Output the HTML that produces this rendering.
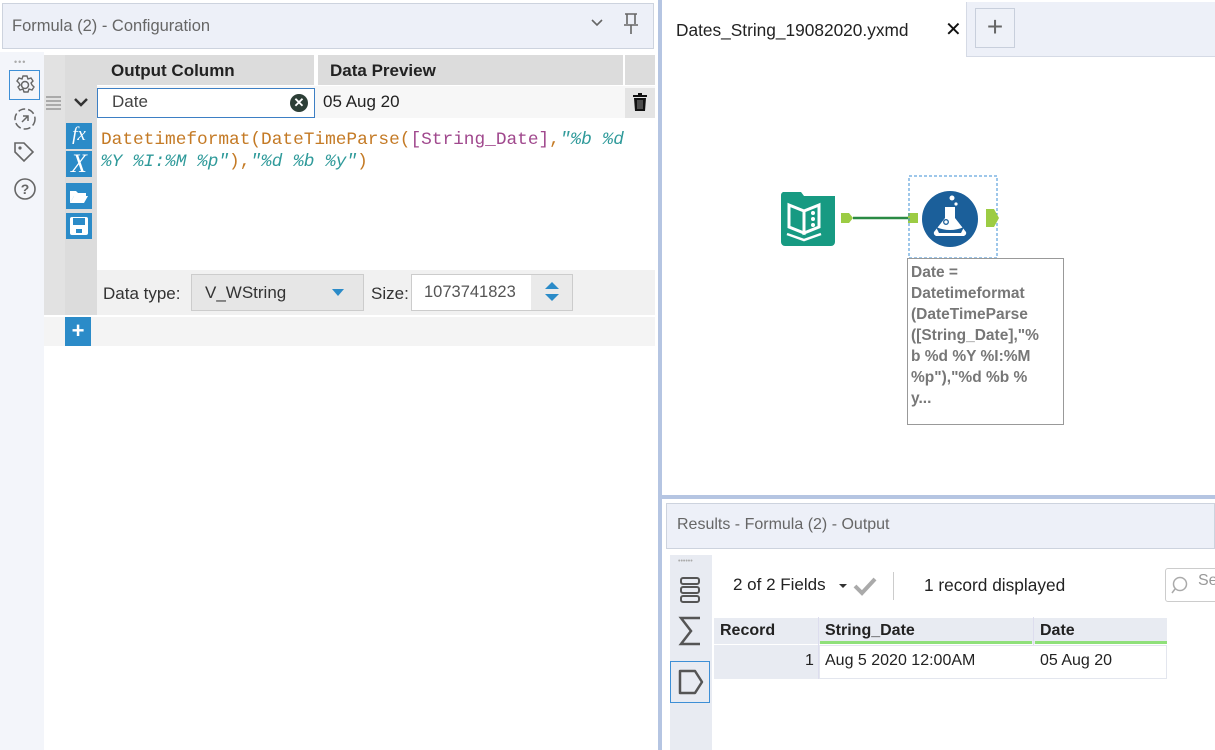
<!DOCTYPE html>
<html><head><meta charset="utf-8"><style>
*{box-sizing:border-box;margin:0;padding:0}
body{width:1215px;height:750px;overflow:hidden;background:#fff;font-family:"Liberation Sans",sans-serif;position:relative;font-size:16px;color:#222}
.a{position:absolute;white-space:nowrap}
.mono{font-family:"Liberation Mono",monospace}
</style></head><body>
<div class="a" style="left:0;top:0;width:656px;height:750px;background:#fff"></div>
<div class="a" style="left:2px;top:3px;width:652px;height:46px;background:#edf0f8;border:1px solid #cdd3de"></div>
<div class="a" style="left:12px;top:17px;font-size:16.5px;color:#666">Formula (2) - Configuration</div>
<svg class="a" style="left:590px;top:18px" width="14" height="10"><path d="M2 2l5 5 5-5" stroke="#666" stroke-width="1.6" fill="none"/></svg>
<svg class="a" style="left:622px;top:12px" width="18" height="24"><path d="M3 2h12M5 2v10M13 2v10M2 13h14M9 13v9" stroke="#666" stroke-width="1.6" fill="none"/></svg>
<div class="a" style="left:0;top:52px;width:44px;height:698px;background:#f3f5fa"></div>
<div class="a" style="left:14px;top:57px;color:#aaa;font-size:9px;letter-spacing:1px">•••</div>
<div class="a" style="left:9px;top:70px;width:31px;height:30px;border:1.5px solid #3d8fd6"></div>
<svg class="a" style="left:14px;top:74px" width="22" height="22"><circle cx="11" cy="11" r="3.5" fill="none" stroke="#666" stroke-width="1.5"/><path d="M9 2h4l1 3 3-1 2 3-2 2 1 2 2 2-2 3-3-1-1 3h-4l-1-3-3 1-2-3 2-2-1-2-2-2 2-3 3 1z" fill="none" stroke="#666" stroke-width="1.4"/></svg>
<svg class="a" style="left:13px;top:107px" width="24" height="24"><circle cx="12" cy="12" r="10" fill="none" stroke="#666" stroke-width="1.5" stroke-dasharray="7 3"/><path d="M9 15l6-6M10 9h5v5" stroke="#666" stroke-width="1.5" fill="none"/></svg>
<svg class="a" style="left:12px;top:140px" width="24" height="24"><path d="M3 3h9l9 9-9 9-9-9z" fill="none" stroke="#666" stroke-width="1.6"/><circle cx="8" cy="8" r="1.6" fill="#666"/></svg>
<svg class="a" style="left:13px;top:177px" width="24" height="24"><circle cx="12" cy="12" r="10" fill="none" stroke="#666" stroke-width="1.6"/><text x="12" y="17" font-size="14" font-weight="bold" text-anchor="middle" fill="#666" font-family="Liberation Sans">?</text></svg>
<div class="a" style="left:44px;top:55px;width:21px;height:260px;background:#e2e2e2"></div>
<div class="a" style="left:65px;top:55px;width:32px;height:260px;background:#dcdcdc"></div>
<div class="a" style="left:97px;top:55px;width:217px;height:30px;background:#dcdcdc"></div>
<div class="a" style="left:318px;top:55px;width:305px;height:30px;background:#dcdcdc"></div>
<div class="a" style="left:625px;top:55px;width:30px;height:30px;background:#dcdcdc"></div>
<div class="a" style="left:111px;top:61px;font-weight:bold;font-size:17px">Output Column</div>
<div class="a" style="left:330px;top:61px;font-weight:bold;font-size:17px">Data Preview</div>
<div class="a" style="left:97px;top:86px;width:558px;height:32px;background:#f7f7f7"></div>
<div class="a" style="left:46px;top:96px;width:15px;height:1.5px;background:#aaa;box-shadow:0 4px 0 #aaa,0 8px 0 #aaa,0 12px 0 #aaa"></div>
<svg class="a" style="left:73px;top:96px" width="16" height="12"><path d="M2 3l6 6 6-6" stroke="#333" stroke-width="2.5" fill="none"/></svg>
<div class="a" style="left:97px;top:88px;width:218px;height:30px;background:#fff;border:1.5px solid #3d7fc4"></div>
<div class="a" style="left:112px;top:92px;font-size:17px;color:#444">Date</div>
<div class="a" style="left:290px;top:94px;width:18px;height:18px;border-radius:50%;background:#2d3f37;color:#fff;font-size:13px;font-weight:bold;text-align:center;line-height:18px">✕</div>
<div class="a" style="left:323px;top:92px;font-size:17px">05 Aug 20</div>
<div class="a" style="left:625px;top:88px;width:30px;height:30px;background:#e4e4e4"></div>
<svg class="a" style="left:631px;top:91px" width="18" height="22"><path d="M7 2h4v2h5v2H2V4h5z" fill="#111"/><path d="M3 7h12l-1 13H4z" fill="#111"/><path d="M7 9v9M9 9v9M11 9v9" stroke="#888" stroke-width="1"/></svg>
<div class="a" style="left:66px;top:123px;width:26px;height:26px;background:#2b8bc8;color:#fff;font-family:'Liberation Serif',serif;font-style:italic;font-size:19px;text-align:center;line-height:24px">fx</div>
<div class="a" style="left:66px;top:151px;width:26px;height:26px;background:#2b8bc8;color:#fff;font-family:'Liberation Serif',serif;font-style:italic;font-size:26px;text-align:center;line-height:26px">X</div>
<div class="a" style="left:66px;top:183px;width:26px;height:26px;background:#2b8bc8"></div>
<svg class="a" style="left:68px;top:187px" width="22" height="18"><path d="M2 4h6l2 2h8v3H6L2 16z" fill="#fff"/><path d="M6 9h14l-4 7H2z" fill="#fff"/></svg>
<div class="a" style="left:66px;top:213px;width:26px;height:26px;background:#2b8bc8"></div>
<svg class="a" style="left:67px;top:214px" width="24" height="24"><rect x="3" y="3" width="18" height="18" rx="2" fill="#fff"/><rect x="6" y="4" width="12" height="7" fill="#2b8bc8"/><rect x="9" y="15" width="6" height="4" fill="#2b8bc8"/></svg>
<div class="a mono" style="left:101px;top:129px;font-size:17.8px;line-height:22px;color:#c47a25;white-space:pre">Datetimeformat(DateTimeParse(<span style="color:#a0488d">[String_Date]</span>,<i style="color:#2f9a9a">"%b %d</i>
<i style="color:#2f9a9a">%Y %I:%M %p"</i>),<i style="color:#2f9a9a">"%d %b %y"</i>)</div>
<div class="a" style="left:97px;top:270px;width:558px;height:45px;background:#f1f1f1"></div>
<div class="a" style="left:103px;top:284px;font-size:17px;color:#333">Data type:</div>
<div class="a" style="left:191px;top:274px;width:173px;height:37px;background:#e6e6e6;border:1px solid #ccc"></div>
<div class="a" style="left:205px;top:283px;font-size:17px;color:#333">V_WString</div>
<svg class="a" style="left:331px;top:288px" width="14" height="9"><path d="M1 1h12L7 8z" fill="#2b8bc8"/></svg>
<div class="a" style="left:371px;top:284px;font-size:17px;color:#333">Size:</div>
<div class="a" style="left:411px;top:274px;width:162px;height:37px;background:#fff;border:1px solid #ccc"></div>
<div class="a" style="left:531px;top:275px;width:41px;height:35px;background:#eaeaea"></div>
<div class="a" style="left:424px;top:283px;font-size:16.5px;color:#555">1073741823</div>
<svg class="a" style="left:544px;top:279px" width="16" height="26"><path d="M1 10L8 3l7 7z" fill="#2b8bc8"/><path d="M1 15l7 7 7-7z" fill="#2b8bc8"/></svg>
<div class="a" style="left:44px;top:317px;width:611px;height:29px;background:#f4f4f4"></div>
<div class="a" style="left:65px;top:317px;width:26px;height:29px;background:#2b8bc8;color:#fff;font-size:22px;font-weight:bold;text-align:center;line-height:28px">+</div>
<div class="a" style="left:656px;top:0;width:4px;height:750px;background:#fff"></div>
<div class="a" style="left:658px;top:0;width:4px;height:750px;background:#b5c5e2"></div>
<div class="a" style="left:662px;top:0;width:553px;height:57px;background:#fff"></div>
<div class="a" style="left:966px;top:2px;width:249px;height:55px;background:#edf0f8;border-left:1px solid #d5dae5;border-bottom:1px solid #d5dae5"></div>
<div class="a" style="left:975px;top:8px;width:40px;height:40px;border:1px solid #c8cfdc;background:#eef1f8;color:#666;font-size:28px;text-align:center;line-height:36px">+</div>
<div class="a" style="left:676px;top:20px;font-size:17.3px;color:#222">Dates_String_19082020.yxmd</div>
<div class="a" style="left:945px;top:17px;font-size:20px;color:#111">✕</div>
<svg class="a" style="left:775px;top:175px" width="300" height="260">
<path d="M8 17h18l3 4h31v46a4 4 0 0 1-4 4H10a4 4 0 0 1-4-4V21a4 4 0 0 1 2-4z" fill="#179a82"/>
<path d="M14 30l15 6v22l-15-6zM44 30l-15 6v22l15-6z" fill="none" stroke="#fff" stroke-width="3"/>
<circle cx="38" cy="38" r="2" fill="#fff"/><circle cx="38" cy="44" r="2" fill="#fff"/><circle cx="38" cy="50" r="2" fill="#fff"/>
<path d="M12 59l17 6 17-6" fill="none" stroke="#fff" stroke-width="2.5"/>
<path d="M66 38h8l4 5-4 5h-8z" fill="#9ccc44"/>
<line x1="78" y1="43" x2="136" y2="43" stroke="#2a8a44" stroke-width="2.5"/>
<rect x="133" y="38" width="10" height="10" fill="#9ccc44"/>
<rect x="134" y="1" width="88" height="82" fill="none" stroke="#3d8fd6" stroke-dasharray="3 2"/>
<circle cx="175" cy="44" r="28" fill="#1b5f9a"/>
<path d="M168 32h14M170 32v11l-11 14a3 3 0 0 0 3 4h26a3 3 0 0 0 3-4l-11-14V32" fill="#fff"/>
<path d="M161 52q14 6 28 0l-3 6h-22z" fill="#1b5f9a"/>
<circle cx="171" cy="47" r="2.3" fill="none" stroke="#1b5f9a" stroke-width="1.3"/>
<circle cx="177" cy="23" r="2.5" fill="#fff"/><circle cx="181" cy="29" r="1.6" fill="#fff"/>
<path d="M211 34h8l5 9-5 9h-8z" fill="#9ccc44"/>
</svg>
<div class="a" style="left:907px;top:258px;width:157px;height:167px;border:1px solid #999;background:#fff"></div>
<div class="a" style="left:911px;top:262px;font-size:15.5px;line-height:21px;color:#777;font-weight:bold">Date =<br>Datetimeformat<br>(DateTimeParse<br>([String_Date],"%<br>b %d %Y %I:%M<br>%p"),"%d %b %<br>y...</div>
<div class="a" style="left:662px;top:495px;width:553px;height:4px;background:#b5c5e2"></div>
<div class="a" style="left:666px;top:503px;width:549px;height:46px;background:#edf0f8;border:1px solid #cdd3de"></div>
<div class="a" style="left:677px;top:516px;font-size:16px;color:#666">Results - Formula (2) - Output</div>
<div class="a" style="left:670px;top:555px;width:42px;height:195px;background:#e8ebf2"></div>
<div class="a" style="left:678px;top:558px;color:#aaa;font-size:7px">••••••</div>
<svg class="a" style="left:679px;top:575px" width="24" height="30"><rect x="2" y="3" width="18" height="6" rx="2" fill="none" stroke="#555" stroke-width="2"/><rect x="2" y="12" width="18" height="6" rx="2" fill="none" stroke="#555" stroke-width="2"/><rect x="2" y="21" width="18" height="6" rx="2" fill="none" stroke="#555" stroke-width="2"/></svg>
<svg class="a" style="left:678px;top:615px" width="26" height="32"><path d="M22 3H3l10 13L3 29h19" fill="none" stroke="#555" stroke-width="2.5"/></svg>
<div class="a" style="left:670px;top:661px;width:40px;height:42px;border:1.5px solid #3d8fd6"></div>
<svg class="a" style="left:677px;top:667px" width="28" height="30"><path d="M3 4h15l7 11-7 11H3z" fill="none" stroke="#555" stroke-width="2.5" stroke-linejoin="round"/></svg>
<div class="a" style="left:733px;top:575px;font-size:17px">2 of 2 Fields</div>
<svg class="a" style="left:838px;top:583px" width="10" height="6"><path d="M1 1h8L5 5z" fill="#333"/></svg>
<svg class="a" style="left:853px;top:576px" width="24" height="20"><path d="M2 10l7 7L22 3" fill="none" stroke="#aaa" stroke-width="4"/></svg>
<div class="a" style="left:893px;top:572px;width:1px;height:28px;background:#ccc"></div>
<div class="a" style="left:924px;top:575px;font-size:17.3px">1 record displayed</div>
<div class="a" style="left:1165px;top:568px;width:60px;height:34px;border:1px solid #ccc;border-radius:3px;background:#fff"></div>
<svg class="a" style="left:1171px;top:575px" width="18" height="20"><circle cx="9" cy="9" r="6.5" fill="none" stroke="#aaa" stroke-width="1.5"/><path d="M4 14l-3 4" stroke="#aaa" stroke-width="1.5"/></svg>
<div class="a" style="left:1198px;top:572px;font-size:16px;color:#999">Se</div>
<div class="a" style="left:714px;top:618px;width:453px;height:26px;background:#e8ebf2"></div>
<div class="a" style="left:818px;top:617px;width:1px;height:62px;background:#dde"></div>
<div class="a" style="left:1033px;top:617px;width:1px;height:62px;background:#dde"></div>
<div class="a" style="left:820px;top:641px;width:212px;height:3px;background:#8fe07a"></div>
<div class="a" style="left:1035px;top:641px;width:132px;height:3px;background:#8fe07a"></div>
<div class="a" style="left:720px;top:622px;font-size:16px;font-weight:bold">Record</div>
<div class="a" style="left:825px;top:622px;font-size:16px;font-weight:bold">String_Date</div>
<div class="a" style="left:1040px;top:622px;font-size:16px;font-weight:bold">Date</div>
<div class="a" style="left:714px;top:645px;width:104px;height:34px;background:#e8ebf2"></div>
<div class="a" style="left:819px;top:645px;width:348px;height:34px;border:1px solid #e3e6ee;background:#fff"></div>
<div class="a" style="left:805px;top:652px;font-size:16px">1</div>
<div class="a" style="left:825px;top:652px;font-size:16px">Aug 5 2020 12:00AM</div>
<div class="a" style="left:1040px;top:652px;font-size:16px">05 Aug 20</div>
</body></html>
